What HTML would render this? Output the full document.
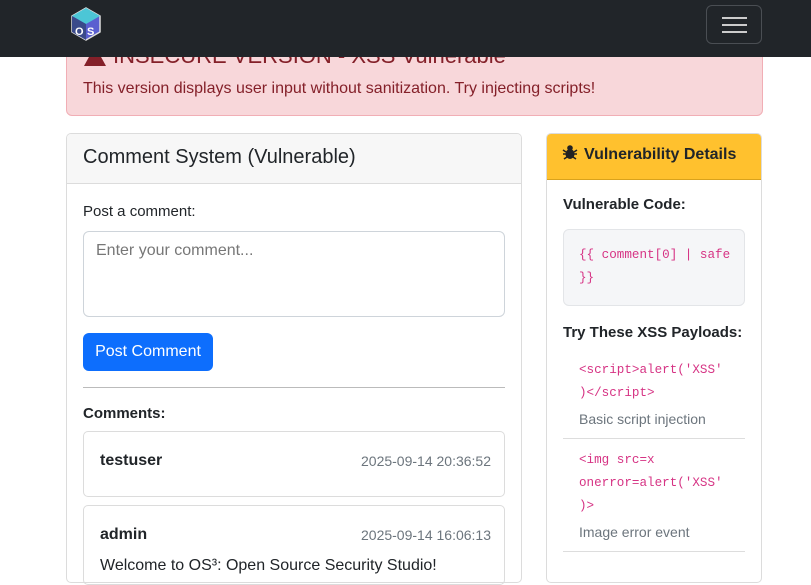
<!DOCTYPE html>
<html><head><style>
*{box-sizing:border-box;margin:0;padding:0}
body{width:811px;height:567px;overflow:hidden;background:#fff;font-family:"Liberation Sans",sans-serif;color:#212529;position:relative;font-size:15px}
.nav{position:absolute;left:0;top:0;width:811px;height:57px;background:#212529;z-index:5}
.tog{position:absolute;left:706px;top:5px;width:56px;height:39px;border:1px solid #4a4e53;border-radius:6px}
.tog i{position:absolute;left:15px;width:25px;height:2px;background:#ccc}
.alert{position:absolute;left:66px;top:30px;width:697px;height:86px;background:#f8d7da;border:1px solid #f1aeb5;border-radius:6px;color:#842029}
.alert h4{position:absolute;left:46px;top:12px;font-size:22px;font-weight:normal}
.alert p{position:absolute;left:16px;top:49px;font-size:16px}
.card{position:absolute;border:1px solid #dcdcdc;border-radius:5px;overflow:hidden}
.mono{font-family:"Liberation Mono",monospace;color:#d63384;font-size:12.6px;line-height:23px;white-space:nowrap}
.s{position:absolute;font-size:16px}
</style></head><body>
<div class="nav">
<svg style="position:absolute;left:70px;top:7px" width="32" height="34" viewBox="0 0 32 34"><polygon points="16,1 30,9 30,25 16,33 2,25 2,9" fill="#5a5fd0" stroke="#ddd" stroke-width="1.5"/><polygon points="16,1 30,9 16,17 2,9" fill="#4cc6d6"/><polygon points="2,9 16,17 16,33 2,25" fill="#3a4a8a"/><text x="5" y="28" font-size="11" font-weight="bold" fill="#fff" font-family="Liberation Sans">O</text><text x="17" y="28" font-size="11" font-weight="bold" fill="#fff" font-family="Liberation Sans">S</text></svg>
<div class="tog"><i style="top:11px"></i><i style="top:18px"></i><i style="top:25px"></i></div>
</div>
<div class="alert"><svg style="position:absolute;left:16px;top:14px" width="24" height="22" viewBox="0 0 24 22"><polygon points="12,1 23,21 1,21" fill="#842029"/></svg><h4>INSECURE VERSION - XSS Vulnerable</h4><p>This version displays user input without sanitization. Try injecting scripts!</p></div>

<div class="card" style="left:66px;top:133px;width:456px;height:450px">
<div style="height:50px;background:#f7f7f7;border-bottom:1px solid #dcdcdc;padding:12px 16px;font-size:20px">Comment System (Vulnerable)</div>
</div>
<div class="s" style="left:83px;top:203px;font-size:15px">Post a comment:</div>
<div style="position:absolute;left:83px;top:231px;width:422px;height:86px;border:1px solid #ced4da;border-radius:6px;padding:10px 12px;color:#777;font-size:16px">Enter your comment...</div>
<div style="position:absolute;left:83px;top:333px;width:130px;height:38px;background:#0d6efd;border-radius:6px;color:#fff;font-size:16px;text-align:center;line-height:38px">Post Comment</div>
<div style="position:absolute;left:83px;top:387px;width:422px;border-top:1px solid #bbb"></div>
<div class="s" style="left:83px;top:405px;font-weight:bold;font-size:15px">Comments:</div>
<div class="card" style="left:83px;top:431px;width:422px;height:66px"></div>
<div class="s" style="left:100px;top:452px;font-weight:bold">testuser</div>
<div class="s" style="left:361px;top:453px;font-size:14px;color:#6c757d">2025-09-14 20:36:52</div>
<div class="card" style="left:83px;top:505px;width:422px;height:80px"></div>
<div class="s" style="left:100px;top:526px;font-weight:bold">admin</div>
<div class="s" style="left:361px;top:527px;font-size:14px;color:#6c757d">2025-09-14 16:06:13</div>
<div class="s" style="left:100px;top:557px">Welcome to OS³: Open Source Security Studio!</div>

<div class="card" style="left:546px;top:133px;width:216px;height:450px">
<div style="height:46px;background:#ffc12e;border-bottom:1px solid #d9a21c;padding:12px 10px 0 37px;font-size:16px;font-weight:bold;white-space:nowrap">Vulnerability Details</div>
</div>
<svg style="position:absolute;left:562px;top:144px" width="16" height="16" viewBox="0 0 16 16"><ellipse cx="8" cy="10" rx="4.5" ry="5" fill="#222"/><circle cx="8" cy="4" r="2.8" fill="#222"/><path d="M1 6l3 2M15 6l-3 2M1 10h3M15 10h-3M2 15l3-2M14 15l-3-2" stroke="#222" stroke-width="1.6"/></svg>
<div class="s" style="left:563px;top:196px;font-weight:bold;font-size:15px">Vulnerable Code:</div>
<div style="position:absolute;left:563px;top:229px;width:182px;height:77px;background:#f5f6f8;border:1px solid #e3e5e8;border-radius:6px;padding:14px 10px 14px 15px" class="mono">{{ comment[0] | safe<br>}}</div>
<div class="s" style="left:563px;top:324px;font-weight:bold;font-size:15px">Try These XSS Payloads:</div>
<div class="mono" style="position:absolute;left:579px;top:359px">&lt;script&gt;alert('XSS'<br>)&lt;/script&gt;</div>
<div class="s" style="left:579px;top:411px;font-size:14px;color:#6c757d">Basic script injection</div>
<div style="position:absolute;left:563px;top:438px;width:182px;border-top:1px solid #ddd"></div>
<div class="mono" style="position:absolute;left:579px;top:449px">&lt;img src=x<br>onerror=alert('XSS'<br>)&gt;</div>
<div class="s" style="left:579px;top:524px;font-size:14px;color:#6c757d">Image error event</div>
<div style="position:absolute;left:563px;top:551px;width:182px;border-top:1px solid #ddd"></div>
</body></html>
